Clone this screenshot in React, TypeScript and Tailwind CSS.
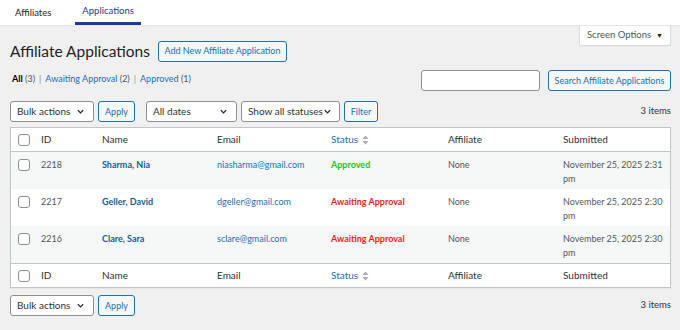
import React from 'react';

const font = { fontFamily: 'Lato, "Noto Sans", sans-serif' };

type Row = {
  id: number;
  name: string;
  email: string;
  status: 'Approved' | 'Awaiting Approval';
  submitted: string;
};

const rows: Row[] = [
  { id: 2218, name: 'Sharma, Nia', email: 'niasharma@gmail.com', status: 'Approved', submitted: 'November 25, 2025 2:31 pm' },
  { id: 2217, name: 'Geller, David', email: 'dgeller@gmail.com', status: 'Awaiting Approval', submitted: 'November 25, 2025 2:30 pm' },
  { id: 2216, name: 'Clare, Sara', email: 'sclare@gmail.com', status: 'Awaiting Approval', submitted: 'November 25, 2025 2:30 pm' },
];

const Chevron = () => (
  <svg width="9" height="9" viewBox="0 0 10 10" className="shrink-0">
    <path d="M2 3.5 L5 6.5 L8 3.5" fill="none" stroke="#1d2327" strokeWidth="1.4" />
  </svg>
);

const Select = ({ label, width }: { label: string; width: string }) => (
  <div className={`${width} h-[21px] flex items-center justify-between pl-[6px] pr-[8px] bg-white border border-[#8c8f94] rounded-[3px] text-[10px] text-[#2c3338] whitespace-nowrap`}>
    <span>{label}</span>
    <Chevron />
  </div>
);

const Button = ({ label, width }: { label: string; width: string }) => (
  <div className={`${width} h-[21px] flex items-center justify-center bg-[#f6f7f7] border border-[#2271b1] rounded-[3px] text-[9px] text-[#2271b1] whitespace-nowrap`}>
    {label}
  </div>
);

const Checkbox = () => (
  <div className="w-[12px] h-[12px] rounded-[3px] border border-[#8c8f94] bg-white" />
);

const SortArrows = () => (
  <svg width="7" height="10" viewBox="0 0 7 10" className="ml-[4px]">
    <path d="M0.5 4 L3.5 0.5 L6.5 4 Z" fill="#a7aaad" />
    <path d="M0.5 6 L3.5 9.5 L6.5 6 Z" fill="#a7aaad" />
  </svg>
);

const HeaderCells = () => (
  <>
    <div className="w-[30px] flex items-center pl-[7px]"><Checkbox /></div>
    <div className="w-[61px]">ID</div>
    <div className="w-[115px]">Name</div>
    <div className="w-[114px]">Email</div>
    <div className="w-[117px] flex items-center text-[#2271b1]">Status<SortArrows /></div>
    <div className="w-[115px]">Affiliate</div>
    <div className="flex-1">Submitted</div>
  </>
);

export default function App() {
  return (
    <div className="w-[680px] h-[330px] bg-[#f0f0f1] overflow-hidden text-[#1d2327]" style={font}>
      {/* top tabs */}
      <div className="h-[26px] bg-white border-b border-[#e5e5e5] flex items-end pl-[15px] text-[9.5px]">
        <div className="h-full flex items-center pt-[1px] mr-[24px]">Affiliates</div>
        <div className="h-full flex items-center px-[7px] pt-[1px] text-[#1e3a8a] border-b-[3px] border-[#1e3a95]">Applications</div>
      </div>

      <div className="pl-[10px] pr-[9px]">
        <div className="flex justify-end">
          <div className="w-[92px] h-[20px] bg-white border border-t-0 border-[#dcdcde] rounded-b-[3px] shadow-[0_1px_1px_rgba(0,0,0,0.04)] flex items-center justify-center gap-[5px] text-[9.5px] text-[#50575e]">
            Screen Options
            <span className="text-[7px] text-[#1d2327]">▼</span>
          </div>
        </div>

        <div className="flex items-center gap-[8px] mt-[-6px]">
          <h1 className="text-[15.5px] leading-[22px] font-normal text-[#1d2327]">Affiliate Applications</h1>
          <div className="h-[21px] w-[129px] flex items-center justify-center bg-[#f6f7f7] border border-[#2271b1] rounded-[3px] text-[9px] text-[#2271b1] whitespace-nowrap">
            Add New Affiliate Application
          </div>
        </div>

        <div className="flex items-center justify-between mt-[8px]">
          <div className="text-[9px] text-[#50575e] flex items-center gap-[4px] pl-[2px] pb-[4px]">
            <span><span className="font-bold text-[#000]">All</span> (3)</span>
            <span className="text-[#8c8f94]">|</span>
            <span><span className="text-[#2271b1]">Awaiting Approval</span> (2)</span>
            <span className="text-[#8c8f94]">|</span>
            <span><span className="text-[#2271b1]">Approved</span> (1)</span>
          </div>
          <div className="flex items-center gap-[8px]">
            <div className="w-[119px] h-[21px] bg-white border border-[#8c8f94] rounded-[3px]" />
            <Button label="Search Affiliate Applications" width="w-[123px]" />
          </div>
        </div>

        {/* top tablenav */}
        <div className="flex items-center mt-[10px] h-[21px]">
          <Select label="Bulk actions" width="w-[84px]" />
          <div className="ml-[4px]"><Button label="Apply" width="w-[37px]" /></div>
          <div className="ml-[11px]"><Select label="All dates" width="w-[91px]" /></div>
          <div className="ml-[4px]"><Select label="Show all statuses" width="w-[99px]" /></div>
          <div className="ml-[4px]"><Button label="Filter" width="w-[34px]" /></div>
          <div className="ml-auto text-[9.5px] text-[#2c3338]">3 items</div>
        </div>

        {/* table */}
        <div className="mt-[5px] bg-white border border-[#c3c4c7] shadow-[0_1px_1px_rgba(0,0,0,0.04)] text-[10px]">
          <div className="h-[24px] flex items-center border-b border-[#c3c4c7] text-[#2c3338]">
            <HeaderCells />
          </div>
          {rows.map((r, i) => (
            <div key={r.id} className={`h-[37px] flex items-start pt-[6px] text-[9px] leading-[14px] ${i % 2 === 0 ? 'bg-[#f6f7f7]' : 'bg-white'}`}>
              <div className="w-[30px] pl-[7px] pt-[1px]"><Checkbox /></div>
              <div className="w-[61px] text-[#50575e]">{r.id}</div>
              <div className="w-[115px] font-bold text-[#135e96]">{r.name}</div>
              <div className="w-[114px] text-[#2271b1]">{r.email}</div>
              <div className={`w-[117px] font-bold ${r.status === 'Approved' ? 'text-[#1fc21f]' : 'text-[#ff1a1a]'}`}>{r.status}</div>
              <div className="w-[115px] text-[#50575e]">None</div>
              <div className="w-[106px] text-[#50575e]">{r.submitted}</div>
            </div>
          ))}
          <div className="h-[24px] flex items-center border-t border-[#c3c4c7] text-[#2c3338]">
            <HeaderCells />
          </div>
        </div>

        {/* bottom tablenav */}
        <div className="flex items-center mt-[7px] h-[21px]">
          <Select label="Bulk actions" width="w-[84px]" />
          <div className="ml-[4px]"><Button label="Apply" width="w-[37px]" /></div>
          <div className="ml-auto text-[9.5px] text-[#2c3338]">3 items</div>
        </div>
      </div>
    </div>
  );
}
